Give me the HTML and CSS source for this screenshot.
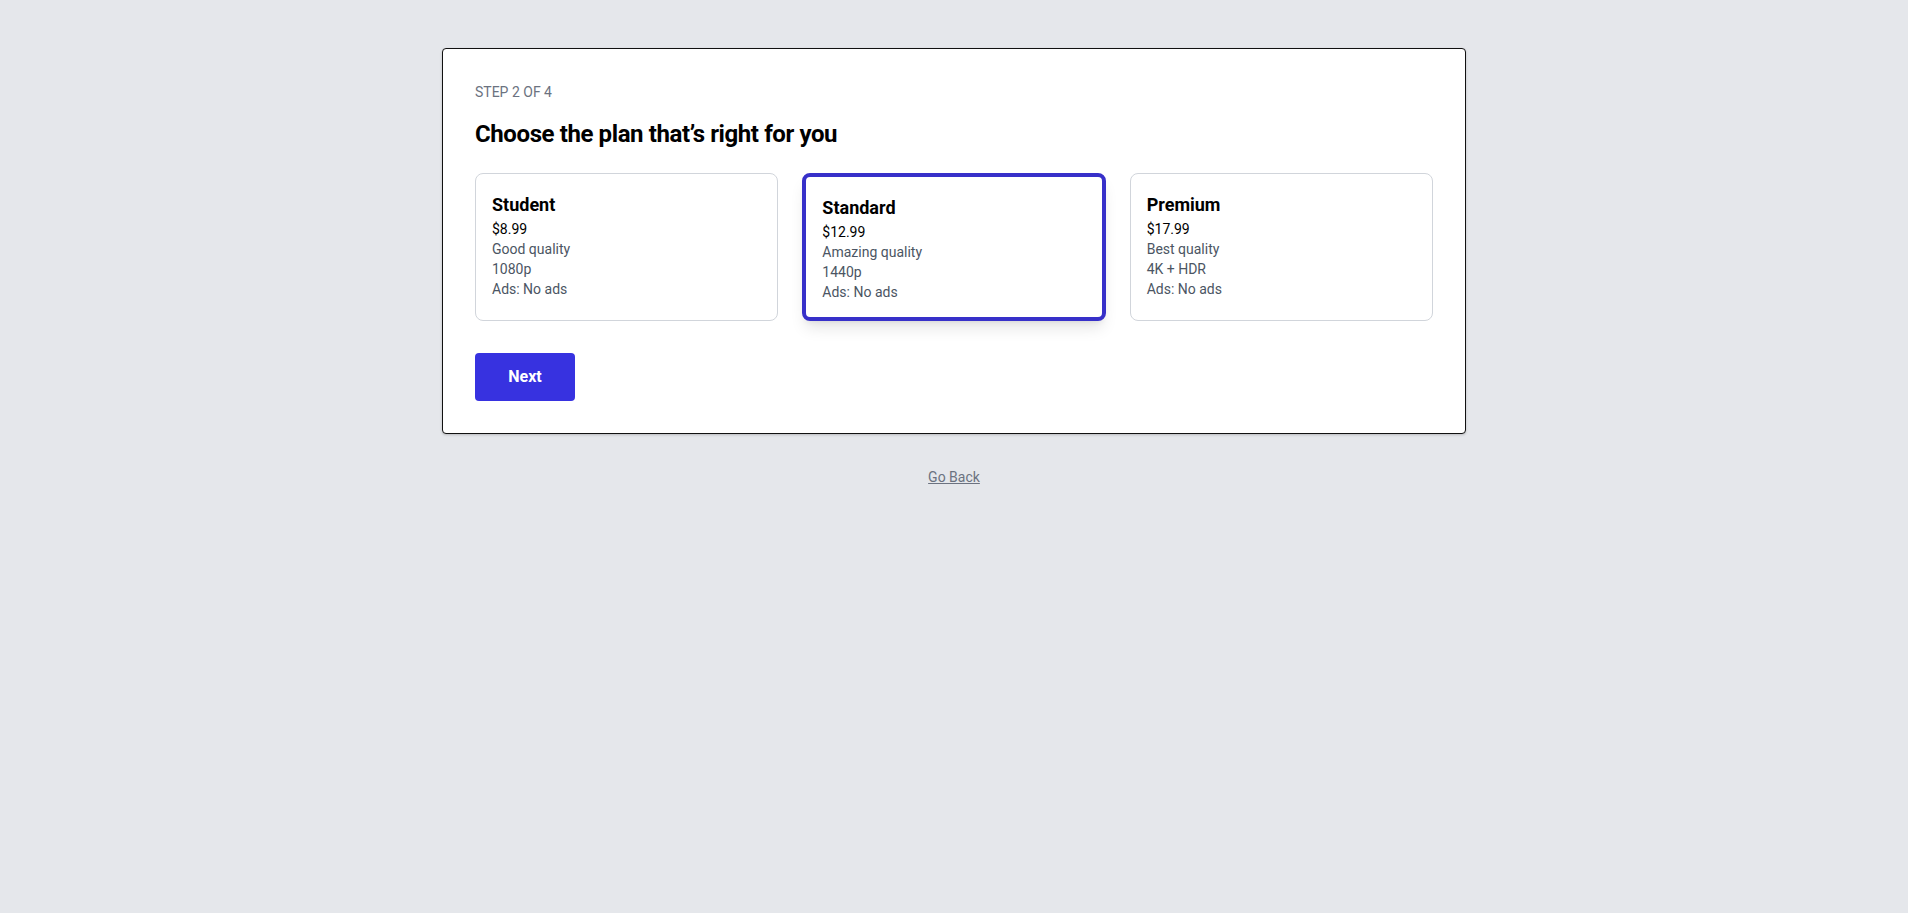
FILE: index.html
```html
<!DOCTYPE html>
<html lang="en">
<head>
<meta charset="utf-8">
<title>Choose your plan</title>
<link rel="stylesheet" href="styles.css">
</head>
<body>
<main class="page">
  <section class="panel">
    <p class="step">STEP 2 OF 4</p>
    <h1 class="title">Choose the plan that’s right for you</h1>
    <div class="plans">
      <div class="plan">
        <h2 class="plan-name">Student</h2>
        <p class="plan-price">$8.99</p>
        <p class="plan-line">Good quality</p>
        <p class="plan-line">1080p</p>
        <p class="plan-line">Ads: No ads</p>
      </div>
      <div class="plan plan-selected">
        <h2 class="plan-name">Standard</h2>
        <p class="plan-price">$12.99</p>
        <p class="plan-line">Amazing quality</p>
        <p class="plan-line">1440p</p>
        <p class="plan-line">Ads: No ads</p>
      </div>
      <div class="plan">
        <h2 class="plan-name">Premium</h2>
        <p class="plan-price">$17.99</p>
        <p class="plan-line">Best quality</p>
        <p class="plan-line">4K + HDR</p>
        <p class="plan-line">Ads: No ads</p>
      </div>
    </div>
    <button class="next" type="button">Next</button>
  </section>
  <a class="back" href="#">Go Back</a>
</main>
</body>
</html>
```
FILE: styles.css
```css
* { box-sizing: border-box; }
html, body { margin: 0; padding: 0; }
body {
  background: #e5e7eb;
  font-family: Roboto, "Noto Sans", sans-serif;
  color: #000;
  min-height: 913px;
}
.page {
  display: flex;
  flex-direction: column;
  align-items: center;
  padding-top: 48px;
}
.panel {
  width: 1024px;
  background: #fff;
  border: 1px solid #111;
  border-radius: 4px;
  box-shadow: 0 1px 3px rgba(0,0,0,0.12), 0 1px 2px rgba(0,0,0,0.08);
  padding: 32px;
  display: flex;
  flex-direction: column;
  align-items: flex-start;
}
.step {
  margin: 0;
  padding-top: 1px;
  height: 20px;
  font-size: 14px;
  line-height: 20px;
  color: #6b7280;
}
.title {
  margin: 16px 0 0;
  padding-top: 1px;
  height: 32px;
  font-size: 24px;
  line-height: 32px;
  font-weight: 700;
  letter-spacing: -0.4px;
}
.plans {
  margin-top: 24px;
  width: 100%;
  display: grid;
  grid-template-columns: repeat(3, 1fr);
  gap: 24px;
}
.plan {
  border: 1px solid #d1d5db;
  border-radius: 8px;
  padding: 17px 16px 15px;
  background: #fff;
}
.plan-selected {
  border: 4px solid #3730c9;
  box-shadow: 0 10px 15px -3px rgba(0,0,0,0.1), 0 4px 6px -4px rgba(0,0,0,0.1);
}
.plan-name {
  margin: 0;
  font-size: 18px;
  line-height: 28px;
  font-weight: 700;
}
.plan-price {
  margin: 0;
  font-size: 14px;
  line-height: 20px;
  color: #000;
}
.plan-line {
  margin: 0;
  font-size: 14px;
  line-height: 20px;
  color: #4b5563;
}
.next {
  margin-top: 32px;
  border: 0;
  border-radius: 4px;
  background: #3732e0;
  color: #fff;
  font-family: inherit;
  font-size: 16px;
  font-weight: 700;
  line-height: 24px;
  padding: 12px 32px;
  width: 100px;
  cursor: pointer;
}
.back {
  margin-top: 33px;
  font-size: 14px;
  line-height: 20px;
  color: #6b7280;
  text-decoration: underline;
}
```
